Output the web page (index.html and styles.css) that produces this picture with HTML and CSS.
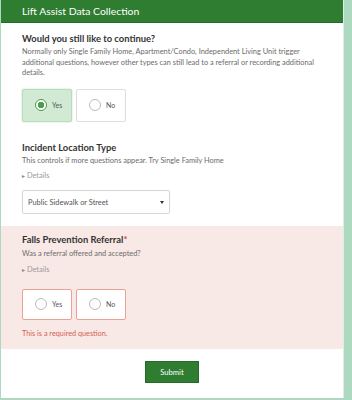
FILE: index.html
```html
<!DOCTYPE html>
<html>
<head>
  <link rel="stylesheet" href="styles.css">
</head>
<body>
  <div class="survey">
    <div class="survey-header">Lift Assist Data Collection</div>

    <div class="question first">
      <div class="q-title">Would you still like to continue?</div>
      <div class="q-desc">Normally only Single Family Home, Apartment/Condo, Independent Living Unit trigger<br>additional questions, however other types can still lead to a referral or recording additional<br>details.</div>
      <div class="radio-group">
        <label class="radio-box checked"><span class="dot"></span>Yes</label>
        <label class="radio-box"><span class="dot"></span>No</label>
      </div>
    </div>

    <div class="question second">
      <div class="q-title">Incident Location Type</div>
      <div class="q-desc">This controls if more questions appear. Try Single Family Home</div>
      <div class="details"><span class="tri">&#9656;</span> Details</div>
      <div class="select-box">
        <span>Public Sidewalk or Street</span>
        <span class="caret"></span>
      </div>
    </div>

    <div class="question error">
      <div class="q-title">Falls Prevention Referral<span class="req">*</span></div>
      <div class="q-desc">Was a referral offered and accepted?</div>
      <div class="details"><span class="tri">&#9656;</span> Details</div>
      <div class="radio-group">
        <label class="radio-box"><span class="dot"></span>Yes</label>
        <label class="radio-box"><span class="dot"></span>No</label>
      </div>
      <div class="err-msg">This is a required question.</div>
    </div>

    <div class="submit-row">
      <button class="submit-btn">Submit</button>
    </div>
  </div>
</body>
</html>
```

FILE: styles.css
```css
/* Общие стили */
body {
  margin: 0;
  background-color: #acd9c0;
  font-family: Lato, "Open Sans", sans-serif;
  color: #4a4a4a;
}

.survey {
  width: 342px;
  margin-left: 1px;
  background-color: #fff;
  border-right: 1px solid #dcefe4;
  padding-bottom: 15px;
}

.survey-header {
  height: 22px;
  line-height: 22px;
  padding-left: 21px;
  background-color: #2f7d31;
  border-bottom: 1px solid #256a28;
  color: #fff;
  font-size: 10.4px;
}

/* Вопросы */
.question {
  padding: 0 21px;
}

.question.first {
  padding-top: 9px;
}

.question.second {
  margin-top: 19px;
}

.q-title {
  font-size: 9.4px;
  line-height: 14px;
  font-weight: bold;
  color: #333;
}

.q-desc {
  font-size: 7.4px;
  line-height: 10.5px;
  color: #6b6b6b;
  margin-top: 1px;
  white-space: nowrap;
}

.details {
  margin-top: 4px;
  font-size: 7.4px;
  line-height: 11px;
  color: #999;
}

.details .tri {
  font-size: 6px;
  color: #888;
}

/* Радио кнопки */
.radio-group {
  display: flex;
  gap: 4px;
  margin-top: 10px;
}

.radio-box {
  display: flex;
  align-items: center;
  box-sizing: border-box;
  width: 50px;
  height: 33px;
  padding-left: 12px;
  border: 1px solid #ddd;
  border-radius: 2px;
  background-color: #fff;
  font-size: 7px;
  color: #555;
}

.radio-box .dot {
  box-sizing: border-box;
  width: 12px;
  height: 12px;
  margin-right: 5px;
  border: 1px solid #bbb;
  border-radius: 50%;
  background-color: #fff;
}

.radio-box.checked {
  background-color: #d2ead3;
  border-color: #b9dcbc;
  box-shadow: 0 0 2px #b9dcbc;
}

.radio-box.checked .dot {
  border: 1.5px solid #4a9d4e;
  background: radial-gradient(circle, #4a9d4e 0 3px, #fff 3.5px);
}

/* Выпадающий список */
.select-box {
  display: flex;
  justify-content: space-between;
  align-items: center;
  box-sizing: border-box;
  width: 148px;
  height: 24px;
  margin-top: 9px;
  padding: 0 5px 0 5px;
  border: 1px solid #d6d6d6;
  border-radius: 2px;
  font-size: 7.4px;
  color: #555;
}

.select-box .caret {
  width: 0;
  height: 0;
  border-left: 2.5px solid transparent;
  border-right: 2.5px solid transparent;
  border-top: 3px solid #333;
}

/* Ошибка */
.question.error {
  margin-top: 12px;
  padding-top: 7px;
  padding-bottom: 10px;
  background-color: #f9e9e6;
}

.question.error .q-desc {
  margin-top: 2px;
}

.question.error .radio-group {
  margin-top: 14px;
}

.question.error .radio-box {
  height: 31px;
  border-color: #eba195;
}

.req {
  color: #d43f2a;
}

.err-msg {
  margin-top: 8px;
  font-size: 7.3px;
  line-height: 11px;
  color: #d66050;
}

/* Кнопка отправки */
.submit-row {
  display: flex;
  justify-content: center;
  margin-top: 12px;
}

.submit-btn {
  width: 54px;
  height: 22px;
  padding: 0;
  border: 1px solid #276b29;
  border-radius: 0;
  background-color: #2f7d31;
  color: #fff;
  font-family: inherit;
  font-size: 7.6px;
}
```
